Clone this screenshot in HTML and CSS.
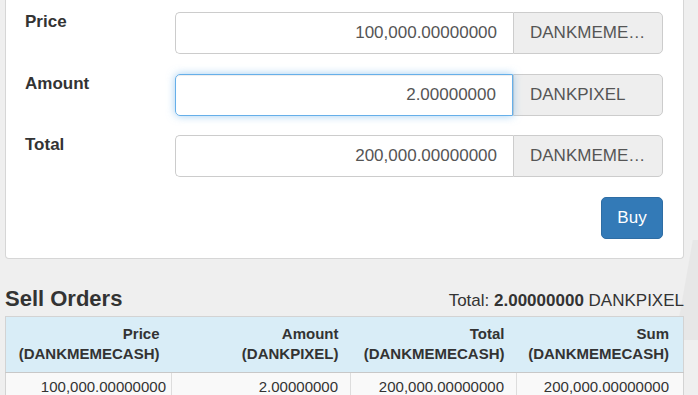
FILE: index.html
```html
<!DOCTYPE html>
<html>
<head>
<meta charset="utf-8">
<link rel="stylesheet" href="styles.css">
</head>
<body>
<div class="watermark"></div>
<div class="page">
  <div class="panel">
    <div class="form-row">
      <label class="label">Price</label>
      <div class="input-group">
        <div class="input">100,000.00000000</div>
        <div class="addon">DANKMEMECASH</div>
      </div>
    </div>
    <div class="form-row">
      <label class="label">Amount</label>
      <div class="input-group">
        <div class="input focus">2.00000000</div>
        <div class="addon">DANKPIXEL</div>
      </div>
    </div>
    <div class="form-row">
      <label class="label">Total</label>
      <div class="input-group">
        <div class="input">200,000.00000000</div>
        <div class="addon">DANKMEMECASH</div>
      </div>
    </div>
    <div class="actions">
      <button class="btn">Buy</button>
    </div>
  </div>

  <div class="orders-head">
    <h4 class="title">Sell Orders</h4>
    <div class="sum">Total: <b>2.00000000</b> DANKPIXEL</div>
  </div>

  <table class="orders">
    <colgroup>
      <col class="c1"><col class="c2"><col class="c3"><col class="c4">
    </colgroup>
    <thead>
      <tr>
        <th>Price<br>(DANKMEMECASH)</th>
        <th>Amount<br>(DANKPIXEL)</th>
        <th>Total<br>(DANKMEMECASH)</th>
        <th class="last">Sum<br>(DANKMEMECASH)</th>
      </tr>
    </thead>
    <tbody>
      <tr>
        <td class="first">100,000.00000000</td>
        <td>2.00000000</td>
        <td>200,000.00000000</td>
        <td class="last">200,000.00000000</td>
      </tr>
    </tbody>
  </table>
</div>
</body>
</html>
```

FILE: styles.css
```css
html, body {
  margin: 0;
  padding: 0;
  background: #efefef;
  font-family: "Liberation Sans", Arial, sans-serif;
  color: #333;
  overflow: hidden;
}

.watermark {
  position: absolute;
  left: 684px;
  top: 240px;
  width: 40px;
  height: 100px;
  background: #e7e7e7;
  transform: skewX(-10deg);
  z-index: 0;
}

.page {
  position: relative;
  z-index: 1;
  padding: 0 14px 0 5px;
}

.panel {
  background: #fff;
  border: 1px solid #d6d6d6;
  border-top: none;
  border-radius: 0 0 4px 4px;
  padding: 12px 20px 19px 19px;
}

.form-row {
  display: flex;
  align-items: flex-start;
  margin-bottom: 19.5px;
}

.label {
  width: 150px;
  flex: none;
  font-weight: bold;
  font-size: 17px;
  line-height: 24px;
  margin-top: -2px;
  color: #333;
}

.input-group {
  flex: 1;
  display: flex;
  height: 42px;
}

.input {
  flex: 1;
  box-sizing: border-box;
  border: 1px solid #ccc;
  border-right: none;
  border-radius: 5px 0 0 5px;
  text-align: right;
  padding: 0 16px;
  font-size: 17px;
  line-height: 40px;
  color: #555;
}

.input.focus {
  border: 1px solid #66afe9;
  box-shadow: inset 0 1px 1px rgba(0,0,0,.075), 0 0 8px rgba(102,175,233,.6);
  position: relative;
  z-index: 2;
}

.addon {
  width: 150px;
  flex: none;
  box-sizing: border-box;
  background: #eee;
  border: 1px solid #ccc;
  border-radius: 0 5px 5px 0;
  padding: 0 16px;
  font-size: 17px;
  line-height: 40px;
  color: #555;
  white-space: nowrap;
  overflow: hidden;
  text-overflow: ellipsis;
}

.actions {
  display: flex;
  justify-content: flex-end;
}

.btn {
  width: 62px;
  height: 42px;
  background: #337ab7;
  border: 1px solid #2e6da4;
  border-radius: 5px;
  color: #fff;
  font-family: "Liberation Sans", Arial, sans-serif;
  font-size: 17px;
  padding: 0;
}

.orders-head {
  display: flex;
  justify-content: space-between;
  align-items: baseline;
  margin-top: 28px;
}

.title {
  margin: 0;
  font-size: 22px;
  line-height: 24px;
  font-weight: bold;
  color: #333;
}

.sum {
  font-size: 17px;
  color: #333;
}

.orders {
  width: 679px;
  margin-top: 5px;
  border-collapse: collapse;
  table-layout: fixed;
  border: 1px solid #d3d3d3;
}

.c1 { width: 166px; }
.c2 { width: 179px; }
.c3 { width: 166px; }
.c4 { width: 167px; }

.orders th {
  background: #d9edf7;
  font-size: 15px;
  line-height: 20px;
  font-weight: bold;
  text-align: right;
  padding: 7px 12px 8px 8px;
  border-bottom: 1px solid #c8c8c8;
  color: #333;
}

.orders th.last {
  padding-right: 14px;
}

.orders td {
  background: #f9f9f9;
  font-size: 15px;
  line-height: 20px;
  text-align: right;
  padding: 4px 12px 4px 8px;
  border-left: 1px solid #ddd;
  color: #333;
}

.orders td.first {
  padding-right: 5px;
  border-left: none;
}

.orders td.last {
  padding-right: 14px;
}
```
